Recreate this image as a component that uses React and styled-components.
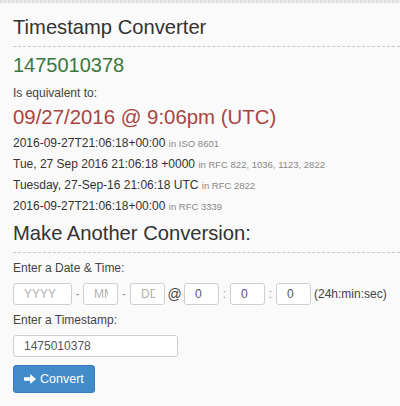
import React from 'react';
import styled, { createGlobalStyle } from 'styled-components';

const GlobalStyle = createGlobalStyle`
  html, body {
    margin: 0;
    padding: 0;
    background: #fafafa;
  }
  body {
    font-family: 'Liberation Sans', Arial, sans-serif;
    color: #333;
  }
`;

const TopStrip = styled.div`
  height: 3px;
  background: repeating-linear-gradient(90deg, #e0e0e0 0 2px, #ebebeb 2px 4px);
`;

const Panel = styled.div`
  padding: 12px 0 0 13px;
`;

const Title = styled.h1`
  margin: 0;
  font-size: 20.2px;
  font-weight: normal;
  line-height: 24px;
  padding-bottom: 7px;
  border-bottom: 1px dashed #c8c8c8;
`;

const Stamp = styled.div`
  font-size: 20px;
  line-height: 26px;
  color: #3c763d;
  margin-top: 5px;
`;

const Label = styled.div`
  font-size: 12px;
  line-height: 16px;
  color: #444;
  margin-top: ${(p) => p.$top || 0}px;
`;

const DateBig = styled.div`
  font-size: 20.4px;
  line-height: 26px;
  color: #a94442;
  margin-top: 3px;
`;

const Formats = styled.div`
  display: flex;
  flex-direction: column;
  margin-top: 3px;
`;

const FormatRow = styled.div`
  font-size: 12px;
  line-height: 21px;
  color: #333;
`;

const Spec = styled.small`
  font-size: 9.5px;
  color: #888;
`;

const Subtitle = styled.h2`
  margin: 3px 0 0;
  font-size: 20.2px;
  font-weight: normal;
  line-height: 26px;
  padding-bottom: 6px;
  border-bottom: 1px dashed #c8c8c8;
`;

const FieldRow = styled.div`
  display: flex;
  align-items: center;
  margin-top: ${(p) => p.$top || 7}px;
  font-size: 12px;
  color: #444;
`;

const Input = styled.input`
  box-sizing: border-box;
  width: ${(p) => p.$w}px;
  height: 22px;
  border: 1px solid #cfcfcf;
  border-radius: 3px;
  background: #fff;
  font-family: 'Liberation Sans', Arial, sans-serif;
  font-size: 12px;
  color: #555;
  padding: 0 9px 0 10px;
  outline: none;
  &::placeholder {
    color: #b0b0b0;
  }
`;

const Sep = styled.span`
  width: ${(p) => p.$w}px;
  text-align: center;
  font-size: ${(p) => p.$size || 12}px;
  color: ${(p) => p.$color || '#999'};
`;

const Hint = styled.span`
  margin-left: 3px;
  font-size: 12px;
  color: #444;
`;

const Button = styled.button`
  display: flex;
  align-items: center;
  gap: 4px;
  margin-top: 8px;
  height: 28px;
  padding: 0 10px;
  border: 1px solid #357ebd;
  border-radius: 3px;
  background: #428bca;
  color: #fff;
  font-family: 'Liberation Sans', Arial, sans-serif;
  font-size: 12.5px;
`;

const ArrowIcon = () => (
  <svg width="12" height="10" viewBox="0 0 12 10">
    <path d="M0 3.2h6.2V0L12 5 6.2 10V6.8H0z" fill="#fff" />
  </svg>
);

const formats = [
  ['2016-09-27T21:06:18+00:00', 'in ISO 8601'],
  ['Tue, 27 Sep 2016 21:06:18 +0000', 'in RFC 822, 1036, 1123, 2822'],
  ['Tuesday, 27-Sep-16 21:06:18 UTC', 'in RFC 2822'],
  ['2016-09-27T21:06:18+00:00', 'in RFC 3339'],
];

export default function App() {
  return (
    <>
      <GlobalStyle />
      <TopStrip />
      <Panel>
        <Title>Timestamp Converter</Title>
        <Stamp>1475010378</Stamp>
        <Label $top={7}>Is equivalent to:</Label>
        <DateBig>09/27/2016 @ 9:06pm (UTC)</DateBig>
        <Formats>
          {formats.map(([value, spec]) => (
            <FormatRow key={spec}>
              {value} <Spec>{spec}</Spec>
            </FormatRow>
          ))}
        </Formats>
        <Subtitle>Make Another Conversion:</Subtitle>
        <Label $top={7}>Enter a Date &amp; Time:</Label>
        <FieldRow>
          <Input $w={59} placeholder="YYYY" />
          <Sep $w={11}>-</Sep>
          <Input $w={35} placeholder="MM" />
          <Sep $w={12}>-</Sep>
          <Input $w={35} placeholder="DD" />
          <Sep $w={19} $size={14} $color="#444">@</Sep>
          <Input $w={35} defaultValue="0" />
          <Sep $w={11}>:</Sep>
          <Input $w={35} defaultValue="0" />
          <Sep $w={11}>:</Sep>
          <Input $w={35} defaultValue="0" />
          <Hint>(24h:min:sec)</Hint>
        </FieldRow>
        <Label $top={7}>Enter a Timestamp:</Label>
        <FieldRow $top={7}>
          <Input $w={165} defaultValue="1475010378" />
        </FieldRow>
        <Button>
          <ArrowIcon />
          Convert
        </Button>
      </Panel>
    </>
  );
}
